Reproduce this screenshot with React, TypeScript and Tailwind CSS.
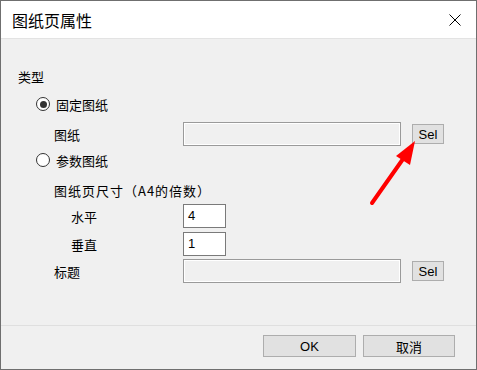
import React from 'react';

const cjk = "font-['Noto_Sans_CJK_SC',sans-serif]";
const latin = "font-['Liberation_Sans','Noto_Sans_CJK_SC',sans-serif]";

const Radio: React.FC<{ checked?: boolean; label: string }> = ({ checked, label }) => (
    <div className="flex h-[20px] items-center pl-[18px]">
        <span className="flex h-[14px] w-[14px] items-center justify-center rounded-full border border-[#333] bg-white">
            {checked && <span className="h-[7px] w-[7px] rounded-full bg-[#333]" />}
        </span>
        <span className="ml-[6px] text-[13px] leading-none">{label}</span>
    </div>
);

const SelButton: React.FC = () => (
    <button
        className={`ml-[11px] h-[20px] w-[32px] border border-[#adadad] bg-[#e1e1e1] text-[13px] leading-none text-black ${latin}`}
    >
        Sel
    </button>
);

const App: React.FC = () => {
    return (
        <div className={`relative flex h-[370px] w-[477px] flex-col border border-[#6f6f6f] bg-[#f0f0f0] text-black ${cjk}`}>
            {/* title bar */}
            <div className="flex h-[38px] items-center justify-between border-b border-[#e3e3e3] bg-white pl-[11px] pr-[14px]">
                <span className="text-[16px] leading-none">图纸页属性</span>
                <svg width="12" height="12" viewBox="0 0 12 12" className="mr-[1px]">
                    <path d="M0.5 0.5 L11.5 11.5 M11.5 0.5 L0.5 11.5" stroke="#000" strokeWidth="1" fill="none" />
                </svg>
            </div>

            {/* body */}
            <div className="flex h-[286px] flex-col pl-[17px] pt-[27px] text-[13px]">
                <div className="flex h-[20px] items-center leading-none">类型</div>

                <div className="mt-[8px]">
                    <Radio checked label="固定图纸" />
                </div>

                <div className="mt-[8px] flex h-[24px] items-center">
                    <div className="w-[165px] pl-[36px] leading-none">图纸</div>
                    <div className="h-[24px] w-[218px] border border-[#9a9a9a] bg-[#f0f0f0] shadow-[inset_0_0_0_1px_#fff]" />
                    <SelButton />
                </div>

                <div className="mt-[4px]">
                    <Radio label="参数图纸" />
                </div>

                <div className="mt-[10px] flex h-[20px] items-center pl-[36px] leading-none tracking-[1px]">图纸页尺寸（A4的倍数）</div>

                <div className="mt-[4px] flex h-[24px] items-center">
                    <div className="w-[165px] pl-[53px] leading-none">水平</div>
                    <div className={`flex h-[24px] w-[43px] items-center border border-[#7a7a7a] bg-white pl-[4px] text-[13px] ${latin}`}>4</div>
                </div>

                <div className="mt-[4px] flex h-[24px] items-center">
                    <div className="w-[165px] pl-[53px] leading-none">垂直</div>
                    <div className={`flex h-[24px] w-[43px] items-center border border-[#7a7a7a] bg-white pl-[4px] text-[13px] ${latin}`}>1</div>
                </div>

                <div className="mt-[3px] flex h-[24px] items-center">
                    <div className="w-[165px] pl-[36px] leading-none">标题</div>
                    <div className="h-[24px] w-[218px] border border-[#9a9a9a] bg-[#f0f0f0] shadow-[inset_0_0_0_1px_#fff]" />
                    <SelButton />
                </div>
            </div>

            {/* footer */}
            <div className="flex h-[44px] justify-end gap-[7px] border-t border-[#dfdfdf] pr-[21px] pt-[9px]">
                <button className={`h-[22px] w-[93px] border border-[#adadad] bg-[#e1e1e1] text-[13px] leading-none ${latin}`}>OK</button>
                <button className="h-[22px] w-[92px] border border-[#adadad] bg-[#e1e1e1] text-[13px] leading-none">取消</button>
            </div>

            {/* annotation arrow */}
            <svg className="pointer-events-none absolute left-[-1px] top-[-1px]" width="477" height="370">
                <line x1="372" y1="203" x2="403" y2="159" stroke="#ff0000" strokeWidth="4" strokeLinecap="round" />
                <polygon points="415,141 396,156 410,165" fill="#ff0000" />
            </svg>
        </div>
    );
};

export default App;
